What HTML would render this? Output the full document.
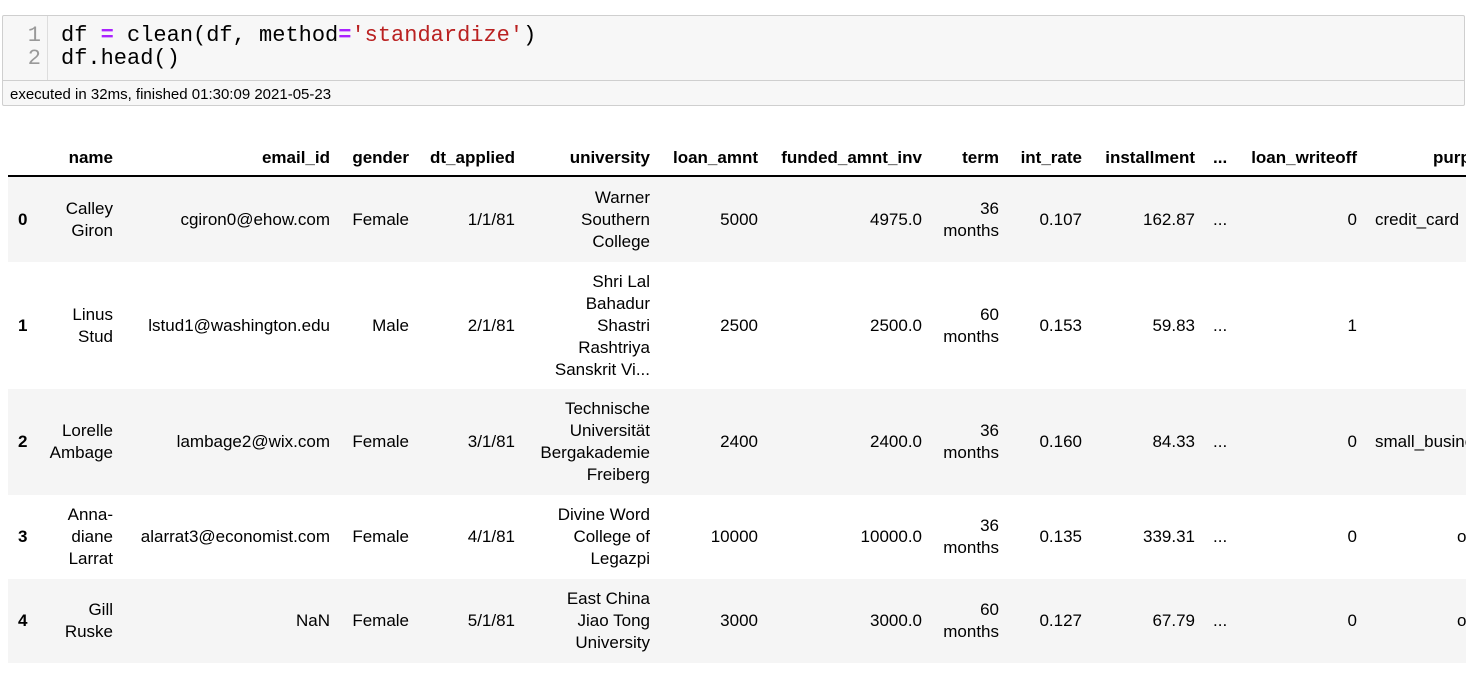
<!DOCTYPE html>
<html><head><meta charset="utf-8"><style>
body{margin:0;width:1474px;height:686px;background:#fff;overflow:hidden;position:relative;font-family:"Liberation Sans",Arial,sans-serif;color:#000}
.cell{position:absolute;left:2px;top:15px;width:1461px;height:89px;border:1px solid #cfcfcf;background:#f7f7f7;border-radius:2px}
.gut{position:absolute;left:0;top:0;width:44px;height:64px;border-right:1px solid #ddd}
.code{position:absolute;top:0;left:0;width:1461px;height:64px;border-bottom:1px solid #cfcfcf;font-family:"Liberation Mono",monospace;font-size:22px;line-height:23px}
.ln{position:absolute;right:6px;color:#999;text-align:right}
.exec{position:absolute;top:70px;left:7px;font-size:15px;color:#000}
.tbl{position:absolute;left:8px;top:120px;width:1458px;height:560px;overflow:hidden}
.row{position:absolute;left:0;width:1600px}
.c{position:absolute;top:0;height:100%;display:flex;align-items:center;justify-content:flex-end;text-align:right;font-size:17px;line-height:22px;white-space:nowrap;left:0}
.h .c{font-weight:bold;align-items:flex-end;padding-bottom:0}
.l{justify-content:flex-start;text-align:left}
.g{background:#f5f5f5}
</style></head><body>
<div class="cell">
 <div class="code">
  <div class="gut"><div class="ln" style="top:8px">1</div><div class="ln" style="top:31px">2</div></div>
  <div style="position:absolute;left:58px;top:8px;white-space:pre">df <span style="color:#aa22ff;font-weight:bold">=</span> clean(df, method<span style="color:#aa22ff;font-weight:bold">=</span><span style="color:#ba2121">'standardize'</span>)</div>
  <div style="position:absolute;left:58px;top:31px;white-space:pre">df.head()</div>
 </div>
 <div class="exec">executed in 32ms, finished 01:30:09 2021-05-23</div>
</div>
<div class="tbl">
 <div class="row h" style="top:0;height:49px;">
  <div class="c" style="width:105px">name</div>
  <div class="c" style="width:322px">email_id</div>
  <div class="c" style="width:401px">gender</div>
  <div class="c" style="width:507px">dt_applied</div>
  <div class="c" style="width:642px">university</div>
  <div class="c" style="width:750px">loan_amnt</div>
  <div class="c" style="width:914px">funded_amnt_inv</div>
  <div class="c" style="width:991px">term</div>
  <div class="c" style="width:1074px">int_rate</div>
  <div class="c" style="width:1187px">installment</div>
  <div class="c l" style="left:1205px">...</div>
  <div class="c" style="width:1349px">loan_writeoff</div>
  <div class="c" style="width:1492px">purpose</div>
 </div>
 <div style="position:absolute;left:0;top:55px;width:1458px;height:2px;background:#000"></div>
</div>
<div class="tbl" style="top:177px;height:490px">
 <div class="row g" style="top:0;height:85px">
  <div class="c l" style="left:10px;font-weight:bold">0</div>
  <div class="c" style="width:105px">Calley<br>Giron</div>
  <div class="c" style="width:322px">cgiron0@ehow.com</div>
  <div class="c" style="width:401px">Female</div>
  <div class="c" style="width:507px">1/1/81</div>
  <div class="c" style="width:642px">Warner<br>Southern<br>College</div>
  <div class="c" style="width:750px">5000</div>
  <div class="c" style="width:914px">4975.0</div>
  <div class="c" style="width:991px">36<br>months</div>
  <div class="c" style="width:1074px">0.107</div>
  <div class="c" style="width:1187px">162.87</div>
  <div class="c l" style="left:1205px">...</div>
  <div class="c" style="width:1349px">0</div>
  <div class="c l" style="left:1367px">credit_card</div>
 </div>
 <div class="row" style="top:85px;height:127px">
  <div class="c l" style="left:10px;font-weight:bold">1</div>
  <div class="c" style="width:105px">Linus<br>Stud</div>
  <div class="c" style="width:322px">lstud1@washington.edu</div>
  <div class="c" style="width:401px">Male</div>
  <div class="c" style="width:507px">2/1/81</div>
  <div class="c" style="width:642px">Shri Lal<br>Bahadur<br>Shastri<br>Rashtriya<br>Sanskrit Vi...</div>
  <div class="c" style="width:750px">2500</div>
  <div class="c" style="width:914px">2500.0</div>
  <div class="c" style="width:991px">60<br>months</div>
  <div class="c" style="width:1074px">0.153</div>
  <div class="c" style="width:1187px">59.83</div>
  <div class="c l" style="left:1205px">...</div>
  <div class="c" style="width:1349px">1</div>
  <div class="c" style="width:1492px">car</div>
 </div>
 <div class="row g" style="top:212px;height:106px">
  <div class="c l" style="left:10px;font-weight:bold">2</div>
  <div class="c" style="width:105px">Lorelle<br>Ambage</div>
  <div class="c" style="width:322px">lambage2@wix.com</div>
  <div class="c" style="width:401px">Female</div>
  <div class="c" style="width:507px">3/1/81</div>
  <div class="c" style="width:642px">Technische<br>Universität<br>Bergakademie<br>Freiberg</div>
  <div class="c" style="width:750px">2400</div>
  <div class="c" style="width:914px">2400.0</div>
  <div class="c" style="width:991px">36<br>months</div>
  <div class="c" style="width:1074px">0.160</div>
  <div class="c" style="width:1187px">84.33</div>
  <div class="c l" style="left:1205px">...</div>
  <div class="c" style="width:1349px">0</div>
  <div class="c l" style="left:1367px">small_business</div>
 </div>
 <div class="row" style="top:318px;height:84px">
  <div class="c l" style="left:10px;font-weight:bold">3</div>
  <div class="c" style="width:105px">Anna-<br>diane<br>Larrat</div>
  <div class="c" style="width:322px">alarrat3@economist.com</div>
  <div class="c" style="width:401px">Female</div>
  <div class="c" style="width:507px">4/1/81</div>
  <div class="c" style="width:642px">Divine Word<br>College of<br>Legazpi</div>
  <div class="c" style="width:750px">10000</div>
  <div class="c" style="width:914px">10000.0</div>
  <div class="c" style="width:991px">36<br>months</div>
  <div class="c" style="width:1074px">0.135</div>
  <div class="c" style="width:1187px">339.31</div>
  <div class="c l" style="left:1205px">...</div>
  <div class="c" style="width:1349px">0</div>
  <div class="c l" style="left:1449px">other</div>
 </div>
 <div class="row g" style="top:402px;height:84px">
  <div class="c l" style="left:10px;font-weight:bold">4</div>
  <div class="c" style="width:105px">Gill<br>Ruske</div>
  <div class="c" style="width:322px">NaN</div>
  <div class="c" style="width:401px">Female</div>
  <div class="c" style="width:507px">5/1/81</div>
  <div class="c" style="width:642px">East China<br>Jiao Tong<br>University</div>
  <div class="c" style="width:750px">3000</div>
  <div class="c" style="width:914px">3000.0</div>
  <div class="c" style="width:991px">60<br>months</div>
  <div class="c" style="width:1074px">0.127</div>
  <div class="c" style="width:1187px">67.79</div>
  <div class="c l" style="left:1205px">...</div>
  <div class="c" style="width:1349px">0</div>
  <div class="c l" style="left:1449px">other</div>
 </div>
</div>
</body></html>
